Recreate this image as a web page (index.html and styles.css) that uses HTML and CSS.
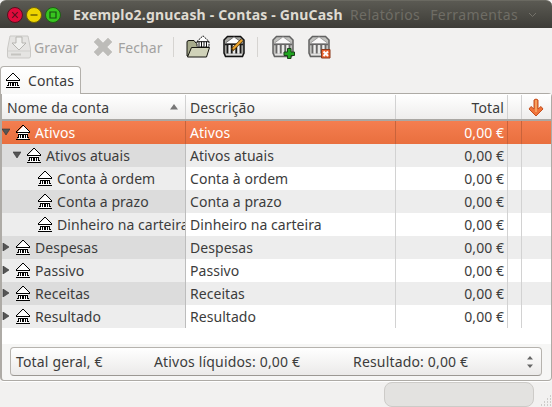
FILE: index.html
```html
<!DOCTYPE html>
<html lang="pt">
<head>
<meta charset="utf-8">
<title>Exemplo2.gnucash - Contas - GnuCash</title>
<link rel="stylesheet" href="styles.css">
</head>
<body>
<svg class="defs" width="0" height="0">
  <symbol id="bank" viewBox="0 0 14 16" shape-rendering="crispEdges">
    <path d="M7 1L13 7V8H12V14H2V8H1V7Z" fill="#fff"/>
    <path d="M6 0h2v1h-2zM5 1h1v1h-1zM8 1h1v1h-1zM4 2h1v1h-1zM9 2h1v1h-1zM3 3h1v1h-1zM10 3h1v1h-1zM2 4h1v1h-1zM11 4h1v1h-1zM1 5h1v1h-1zM12 5h1v1h-1zM0 6h1v2h-1zM13 6h1v2h-1zM1 7h12v1h-12z"/>
    <path d="M2 9h10v1h-10zM2 10h1v3h-1zM4 10h1v3h-1zM6 10h2v3h-2zM9 10h1v3h-1zM11 10h1v3h-1zM1 12h2v1h-2zM11 12h2v1h-2zM0 14h14v1h-14z"/>
  </symbol>
  <symbol id="building" viewBox="0 0 24 24">
    <path d="M5.500 1.500H18.500L22 5V18L20.500 21.500H3.500L2 18V5Z" class="b-shell"/>
    <path d="M3 9.500H21M5.500 9V18.500M9.700 9V18.500M14.300 9V18.500M18.500 9V18.500" class="b-dark"/>
    <path d="M3.500 8L12 1.800L20.500 8V8.500H3.500Z" fill="#fff" stroke="#555" stroke-width=".8"/>
    <path d="M7.600 10V18.500M12 10V18.500M16.400 10V18.500" stroke="#eee" stroke-width="1.800"/>
    <path d="M4 19.500H20" stroke="#ddd" stroke-width="1.400"/>
  </symbol>
</svg>
<div class="window">
  <header class="titlebar">
    <div class="buttons">
      <svg class="wb" viewBox="0 0 16 16"><circle cx="8" cy="8" r="7.500" fill="#df0b3c" stroke="#57101f"/><path d="M5.200 5.200l5.600 5.600M10.800 5.200l-5.600 5.600" stroke="#5c1020" stroke-width="1.200"/></svg>
      <svg class="wb" viewBox="0 0 16 16"><circle cx="8" cy="8" r="7.500" fill="#eed500" stroke="#6d6208"/><path d="M4.500 8h7" stroke="#5d5200" stroke-width="1.300"/></svg>
      <svg class="wb" viewBox="0 0 16 16"><circle cx="8" cy="8" r="7.500" fill="#37c51f" stroke="#205c17"/><path d="M5 5h6v6h-6z" fill="none" stroke="#174c10" stroke-width="1.200"/></svg>
    </div>
    <nav class="ghost"><span>Relatórios</span><span>Ferramentas</span><svg width="9" height="6" viewBox="0 0 9 6"><path d="M1 1l3.500 3.500L8 1" fill="none" stroke="#74726a"/></svg></nav>
    <h1>Exemplo2.gnucash - Contas - GnuCash</h1>
  </header>
  <div class="toolbar">
    <svg class="i-save" width="24" height="24" viewBox="0 0 24 24"><path d="M3 1H21L23.500 14V21Q23.500 23 22 23H2Q.5 23 .5 21V14Z" fill="#e5e4e2" stroke="#cac9c6"/><path d="M1 16H23" stroke="#d0cfcc"/><path d="M9 2H15V8H19L12 15L5 8H9Z" fill="#f0f0ee" stroke="#b6b5b1"/><path d="M4 19.500H14" stroke="#c5c4c0" stroke-width="2"/></svg>
    <span class="t-save">Gravar</span>
    <svg class="i-close" width="20" height="20" viewBox="0 0 20 20"><path d="M5 1L10 6L15 1L19 5L14 10L19 15L15 19L10 14L5 19L1 15L6 10L1 5Z" fill="#bdbcb9" stroke="#c9c8c5"/></svg>
    <span class="t-close">Fechar</span>
    <i class="sep"></i>
    <svg class="i-open" width="25" height="24" viewBox="0 0 25 24"><path d="M1 21V7Q1 5.500 3 5.500H8L10 8H20V21Z" fill="#a7ab8c" stroke="#15150f"/><path d="M11 6.500L17 .8L23 6.500V12H11Z" fill="#fff" stroke="#111" stroke-dasharray="2 .7"/><path d="M11 6.700H23M13 6.500V12M15.500 6.500V12M18 6.500V12M20.500 6.500V12" stroke="#111"/><path d="M5.500 12.500H23.500L20.500 22H1.500Z" fill="#d0d2b9" stroke="#15150f"/></svg>
    <svg class="i-edit" width="24" height="24"><use href="#building"/><path d="M10 15L20 5" stroke="#5b3a08" stroke-width="3.200"/><path d="M11 14L20 5" stroke="#f0a830" stroke-width="1.800"/></svg>
    <i class="sep sep2"></i>
    <svg class="i-new light" width="24" height="24"><use href="#building"/><path d="M16.500 13.500h3.500v3.500h3.500v3.500h-3.500v3h-3.500v-3h-3.500v-3.500h3.500z" fill="#0b9c0b" stroke="#042f04"/></svg>
    <svg class="i-del light" width="24" height="24"><use href="#building"/><path d="M14.500 14.500h8.500v8.500h-8.500z" fill="#e8541c" stroke="#7e2405"/><path d="M16.500 16.500l4.500 4.500M21 16.500l-4.500 4.500" stroke="#fff" stroke-width="2"/></svg>
  </div>
  <div class="tabs"><div class="tab"><svg class="bank"><use href="#bank"/></svg><span>Contas</span></div></div>
  <main class="frame">
    <div class="row head">
      <div class="c1"><span>Nome da conta</span><svg class="sort" width="8" height="6"><path d="M0 5.500L4 0L8 5.500Z" fill="#777"/></svg></div>
      <div><span>Descrição</span></div><div class="num"><span>Total</span></div><div></div>
      <div class="arrow"><svg width="16" height="19" viewBox="0 0 16 19"><path d="M6 2Q8 0 10 2V11L13 8.500L15 11L8 18L1 11L3 8.500L6 11Z" fill="#f0733a" stroke="#c4501f"/><path d="M8 2V14" stroke="#f8ae68" stroke-width="1.500"/></svg></div>
    </div>
    <div class="row sel"><div class="c1"><svg class="tri"><path d="M0 1H8L4 7Z"/></svg><svg class="bank"><use href="#bank"/></svg><span>Ativos</span></div><div><span>Ativos</span></div><div class="num"><span>0,00 €</span></div><div></div><div></div></div>
    <div class="row odd l1"><div class="c1"><svg class="tri"><path d="M0 1H8L4 7Z"/></svg><svg class="bank"><use href="#bank"/></svg><span>Ativos atuais</span></div><div><span>Ativos atuais</span></div><div class="num"><span>0,00 €</span></div><div></div><div></div></div>
    <div class="row l2"><div class="c1"><svg class="bank"><use href="#bank"/></svg><span>Conta à ordem</span></div><div><span>Conta à ordem</span></div><div class="num"><span>0,00 €</span></div><div></div><div></div></div>
    <div class="row odd l2"><div class="c1"><svg class="bank"><use href="#bank"/></svg><span>Conta a prazo</span></div><div><span>Conta a prazo</span></div><div class="num"><span>0,00 €</span></div><div></div><div></div></div>
    <div class="row l2"><div class="c1"><svg class="bank"><use href="#bank"/></svg><span>Dinheiro na carteira</span></div><div><span>Dinheiro na carteira</span></div><div class="num"><span>0,00 €</span></div><div></div><div></div></div>
    <div class="row odd"><div class="c1"><svg class="tri"><path d="M1 0V8L7 4Z"/></svg><svg class="bank"><use href="#bank"/></svg><span>Despesas</span></div><div><span>Despesas</span></div><div class="num"><span>0,00 €</span></div><div></div><div></div></div>
    <div class="row"><div class="c1"><svg class="tri"><path d="M1 0V8L7 4Z"/></svg><svg class="bank"><use href="#bank"/></svg><span>Passivo</span></div><div><span>Passivo</span></div><div class="num"><span>0,00 €</span></div><div></div><div></div></div>
    <div class="row odd"><div class="c1"><svg class="tri"><path d="M1 0V8L7 4Z"/></svg><svg class="bank"><use href="#bank"/></svg><span>Receitas</span></div><div><span>Receitas</span></div><div class="num"><span>0,00 €</span></div><div></div><div></div></div>
    <div class="row"><div class="c1"><svg class="tri"><path d="M1 0V8L7 4Z"/></svg><svg class="bank"><use href="#bank"/></svg><span>Resultado</span></div><div><span>Resultado</span></div><div class="num"><span>0,00 €</span></div><div></div><div></div></div>
    <div class="blank"></div>
    <div class="summary"><div class="combo"><span class="s1">Total geral, €</span><span class="s2">Ativos líquidos: 0,00 €</span><span class="s3">Resultado: 0,00 €</span><svg class="spin" width="6" height="12"><path d="M0 3.500L3 0L6 3.500ZM0 8.500H6L3 12Z" fill="#666"/></svg></div></div>
  </main>
  <footer class="status"><div class="progress"></div><svg class="grip" width="12" height="12"><path d="M10 1h1M7 4h4M4 7h7M1 10h10" stroke="#a9a7a3" stroke-dasharray="1 2"/></svg></footer>
</div>
</body>
</html>
```
FILE: styles.css
```css
* { box-sizing: border-box; }
body { margin: 0; background: #f2f1f0; font: 14px/23px "Noto Sans", sans-serif; color: #3c3c3c; letter-spacing: .05px; }
.defs { position: absolute; }
.window { width: 552px; height: 407px; overflow: hidden; display: flex; flex-direction: column; background: #f2f1f0; }
span, h1 { white-space: nowrap; }
.titlebar { position: relative; flex: none; height: 28px; display: flex; align-items: center; padding-left: 7px; border-radius: 6px 6px 0 0; background: linear-gradient(#5b5a53, #3d3c37); border-top: 1px solid #6a6961; }
.buttons { display: flex; gap: 3px; }
.wb { width: 16px; height: 16px; }
h1 { margin: 0 0 0 12px; font-size: 14px; line-height: 26px; color: #dfdbd2; letter-spacing: .17px; }
.ghost { position: absolute; left: 350px; top: 1px; display: flex; gap: 10px; align-items: center; color: #6f6d65; line-height: 26px; letter-spacing: .4px; }
.toolbar { flex: none; height: 38px; display: flex; align-items: center; padding-left: 7px; color: #a3a2a0; }
.t-save { width: 46px; margin-left: 3px; }
.i-close { margin-left: 13px; }
.t-close { width: 45px; margin-left: 5px; }
.sep { flex: none; width: 1px; height: 20px; background: #d6d4d1; margin: 0 12px 0 10px; }
.i-edit { margin-left: 11px; }
.sep2 { margin: 0 13px 0 11px; }
.i-del { margin-left: 12px; }
.b-shell { fill: #a6a6a2; stroke: #111; stroke-width: 1.5; }
.b-dark { stroke: #1a1a1a; stroke-width: 1.7; }
.light .b-shell, .light .b-dark { stroke: #777; }
.light { opacity: .9; }
.light use { opacity: .7; }
.tabs { flex: none; height: 28px; display: flex; }
.tab { position: relative; width: 81px; height: 28px; z-index: 1; border: 1px solid #b3b0ab; border-bottom: 0; border-radius: 4px 4px 0 0; background: linear-gradient(#fff, #f7f7f6); display: flex; align-items: center; padding-left: 5px; }
.tab span { margin-left: 8px; }
.bank { flex: none; width: 14px; height: 16px; }
.frame { flex: none; margin-top: -1px; height: 288px; border: 1px solid #aeaba6; border-left-width: 2px; border-radius: 0 4px 4px 4px; background: #f6f6f5; box-shadow: 0 1px #fff; }
.row { display: grid; grid-template-columns: 184px 210px 112px 14px 29px; height: 23px; background: #fff; }
.row > div { border-right: 1px solid #d2d2d2; padding-left: 4px; overflow: hidden; min-width: 0; }
.row > div:last-child { border-right: 0; }
.row > .c1 { display: flex; align-items: center; background: #ededed; padding-left: 0; border-color: #bdbdbd; }
.c1 .bank { margin-left: 6px; }
.c1 .bank + span { margin-left: 5px; }
.tri { width: 8px; height: 8px; flex: none; fill: #555; stroke: #333; stroke-width: .6; margin-top: -2px; }
.row > .num { text-align: right; padding-right: 3px; }
.odd { background: #ededed; }
.row.odd > .c1 { background: #dcdcdc; }
.row.l1 > .c1 { padding-left: 11px; }
.row.l2 > .c1 { padding-left: 30px; }
.row.sel { background: linear-gradient(#f47e50, #e96f3e); color: #fff; }
.row.sel > .c1 { background: none; }
.row.sel > div { border-color: #c9633b; }
.row.head { height: 27px; border-top: 1px solid #fff; border-bottom: 2px solid #aaa7a3; background: linear-gradient(#fff, #eeedec); line-height: 25px; letter-spacing: .12px; }
.row.head > .c1 { background: none; justify-content: space-between; padding: 0 7px 0 5px; border-color: #d2d2d2; }
.row.head > .arrow { display: flex; align-items: center; padding-left: 6px; }
.blank { height: 16px; background: #fff; }
.summary { padding: 3px 8px 0; }
.combo { height: 29px; width: 532px; border: 1px solid #b6b3ae; border-bottom-color: #9b9893; border-radius: 4px; background: linear-gradient(#fff, #ebeae9); display: flex; align-items: center; padding-left: 5px; line-height: 27px; letter-spacing: .17px; }
.s1 { width: 138px; }
.s2 { width: 199px; }
.s3 { width: 174px; }
.status { flex: 1; display: flex; position: relative; padding-left: 384px; }
.progress { width: 150px; height: 25px; margin-top: 1px; border: 1px solid #cdcbc8; border-radius: 8px; background: #e3e2e0; }
.grip { margin: 14px 0 0 6px; }
```
